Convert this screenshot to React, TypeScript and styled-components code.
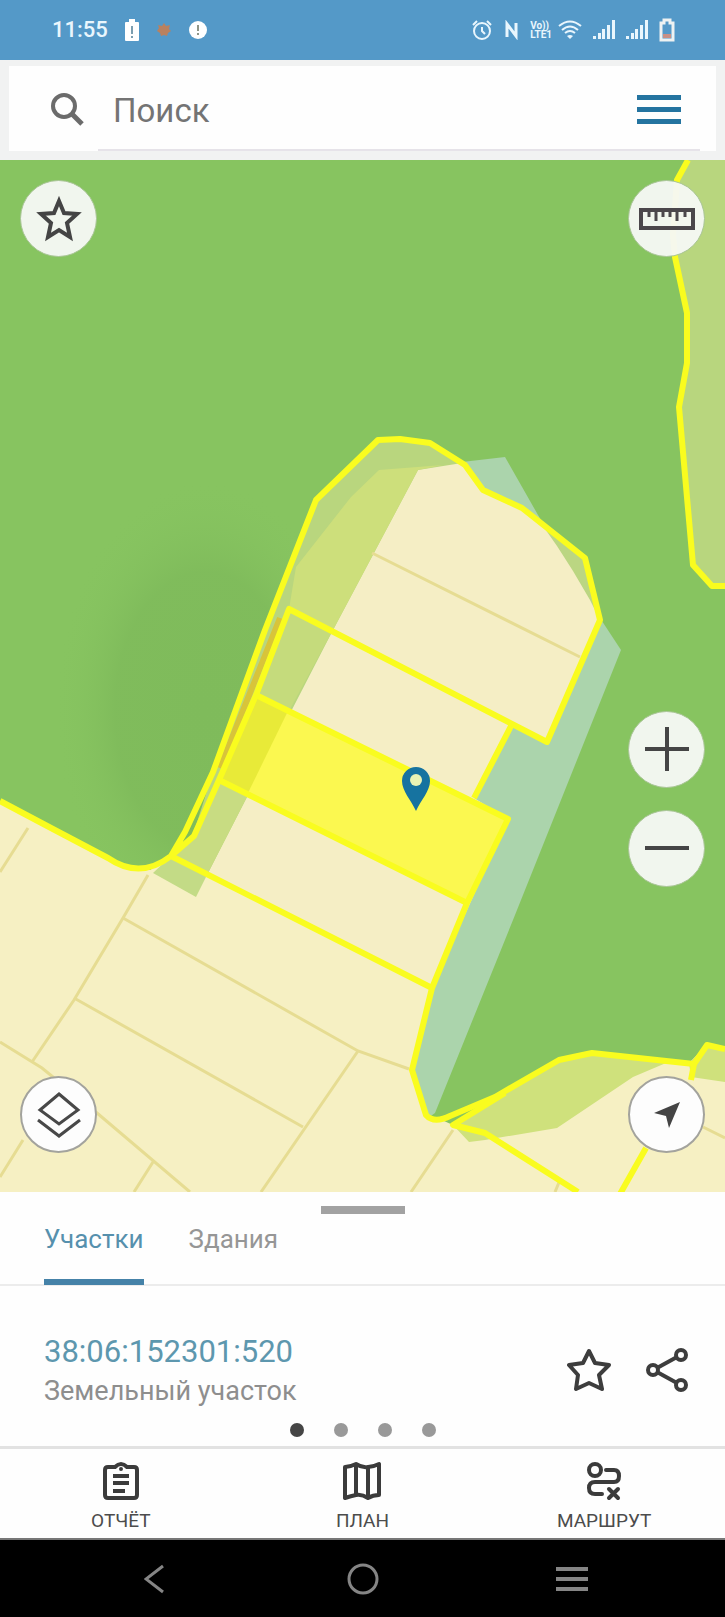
import React from "react";
import styled, { createGlobalStyle } from "styled-components";

const GlobalStyle = createGlobalStyle`
  * { box-sizing: border-box; }
  body { margin: 0; background: #fefefe; font-family: Roboto, "Liberation Sans", sans-serif; }
  button { border: 0; padding: 0; background: none; font: inherit; color: inherit; cursor: pointer; }
  svg { display: block; }
`;

const Screen = styled.div`
  display: flex;
  flex-direction: column;
  width: 100%;
`;

const StatusBar = styled.div`
  display: flex;
  align-items: center;
  justify-content: space-between;
  height: 60px;
  padding: 0 50px 0 52px;
  background: #5499c8;
  color: #e9f6fd;
`;

const StatusLeft = styled.div`
  display: flex;
  align-items: center;
  gap: 17px;
`;

const StatusRight = styled.div`
  display: flex;
  align-items: center;
  gap: 11px;
`;

const Time = styled.span`
  font-size: 22px;
  line-height: 24px;
  font-weight: 500;
`;

const Lte = styled.span`
  display: flex;
  flex-direction: column;
  font-size: 10px;
  line-height: 9px;
  font-weight: 700;
  margin-right: -5px;
`;

const SearchHeader = styled.header`
  padding: 6px 9px 9px;
  background: #f1f2f2;
`;

const SearchCard = styled.div`
  display: flex;
  align-items: center;
  gap: 26px;
  height: 85px;
  padding: 2px 34px 0 40px;
  background: linear-gradient(#e6e3e9, #e6e3e9) no-repeat 89px 100% / calc(100% - 105px) 2px #fefefe;
`;

const SearchInput = styled.input`
  flex: 1;
  min-width: 0;
  padding: 2px 0 0;
  border: 0;
  outline: 0;
  background: none;
  font: 400 33px/40px Roboto, "Liberation Sans", sans-serif;
  color: #666;
  &::placeholder { color: #747474; opacity: 1; }
`;

const MapArea = styled.main`
  position: relative;
  width: 100%;
  aspect-ratio: 725 / 1032;
  overflow: hidden;
`;

const MapDrawing = styled.svg`
  width: 100%;
  height: 100%;
`;

const MapControls = styled.div`
  position: absolute;
  inset: 0;
  display: flex;
  justify-content: space-between;
  padding: 20px 20px 39px;
`;

const ControlColumn = styled.div`
  display: flex;
  flex-direction: column;
  justify-content: space-between;
`;

const ControlStack = styled.div`
  display: flex;
  flex-direction: column;
  gap: 22px;
  margin-top: 264px;
`;

const RoundButton = styled.button<{ $outlined?: boolean }>`
  display: grid;
  place-items: center;
  width: 77px;
  height: 77px;
  border-radius: 50%;
  border: ${(p) => (p.$outlined ? "2px solid #a3a39d" : "1px solid #a9c596")};
  background: ${(p) => (p.$outlined ? "#fdfdfd" : "rgba(246, 248, 244, 0.96)")};
`;

const Sheet = styled.section`
  background: #fefefe;
`;

const HandleRow = styled.div`
  display: flex;
  justify-content: center;
  padding-top: 14px;
`;

const Handle = styled.button`
  width: 84px;
  height: 8px;
  background: #a2a2a2;
`;

const Tabs = styled.div`
  display: flex;
  gap: 45px;
  height: 72px;
  padding: 0 44px;
  border-bottom: 2px solid #ececec;
`;

const Tab = styled.button<{ $active?: boolean }>`
  display: flex;
  align-items: flex-start;
  height: 71px;
  padding-top: 9px;
  border-bottom: ${(p) => (p.$active ? "6px solid #4582a8" : "0")};
  font-size: 26px;
  line-height: 32px;
  color: ${(p) => (p.$active ? "#5690ad" : "#969696")};
`;

const Parcel = styled.article`
  display: flex;
  align-items: center;
  justify-content: space-between;
  padding: 45px 36px 14px 44px;
`;

const ParcelNumber = styled.h2`
  margin: 0;
  font-size: 31px;
  line-height: 42px;
  font-weight: 400;
  color: #5d97ae;
`;

const ParcelKind = styled.p`
  margin: 0;
  font-size: 27px;
  line-height: 36px;
  color: #8e8e8e;
`;

const ParcelActions = styled.div`
  display: flex;
  gap: 34px;
`;

const Pager = styled.div`
  display: flex;
  justify-content: center;
  gap: 30px;
  padding-bottom: 9px;
`;

const Dot = styled.button<{ $active?: boolean }>`
  width: 14px;
  height: 14px;
  border-radius: 50%;
  background: ${(p) => (p.$active ? "#454545" : "#999")};
`;

const BottomNav = styled.nav`
  display: grid;
  grid-template-columns: repeat(3, 1fr);
  height: 94px;
  border-top: 3px solid #e2e2e2;
  border-bottom: 2px solid #777;
  background: #fefefe;
`;

const NavItem = styled.a`
  display: flex;
  flex-direction: column;
  align-items: center;
  gap: 8px;
  padding-top: 12px;
  font-size: 19px;
  line-height: 24px;
  color: #4c4c4c;
  text-decoration: none;
`;

const SystemBar = styled.div`
  display: grid;
  grid-template-columns: repeat(3, 1fr);
  height: 77px;
  padding: 0 49px;
  background: #000;
`;

const SystemButton = styled.button`
  display: grid;
  place-items: center;
`;

const YELLOW = "#f9fc1f";

const Signal = () => (
  <svg width="22" height="22" viewBox="0 0 22 22" fill="currentColor" aria-hidden="true">
    <path d="M0 17h3v3H0zM5 14h3v6H5zM9 10h3v10H9zM14 6h3v14h-3zM19 1h3v19h-3z" />
  </svg>
);

function CadastralMap() {
  return (
    <MapDrawing viewBox="0 160 725 1032" preserveAspectRatio="xMidYMid slice" role="img" aria-label="Карта участков">
      <defs>
        <radialGradient id="shade">
          <stop offset="0" stopColor="#7fbb5b" />
          <stop offset="0.6" stopColor="#7fbb5b" stopOpacity="0.9" />
          <stop offset="1" stopColor="#87c460" stopOpacity="0" />
        </radialGradient>
      </defs>
      <rect y="160" width="725" height="1032" fill="#87c460" />
      <ellipse cx="205" cy="710" rx="150" ry="230" fill="url(#shade)" />

      <path d="M688 160L677 180L673 235L675 257L687 313L687 363L679 407L693 565L712 586H725V160Z" fill="#b8d67e" />

      <path d="M418 470L462 462L505 457L538 515L600 618L621 650L513 920L435 1113L428 1118L412 1070L432 988Z" fill="#abd4ac" />

      <path d="M0 801L51 828L132 870H150L171 856L432 988L412 1070L428 1118L444 1121L453 1125L559 1060L592 1053L689 1063L707 1045L725 1049V1192H0Z" fill="#f6f0c3" />
      <path d="M171 856L153 873L196 897L208 873Z" fill="#c3db86" />

      <path d="M378 440L400 439L430 443L465 465L483 490L522 508L585 558L600 620L547 742L511 726L474 798L508 819L432 988L171 856L192 838L316 500Z" fill="#f5eec5" />
      <path d="M543 526L585 558L600 620L590 600L573 571L557 546Z" fill="#bbd682" />
      <path d="M378 440L400 439L430 443L462 463L418 470L333 630L247 797L208 873L171 856L192 838L213 772L316 500Z" fill="#b9d67e" />
      <path d="M443 465L418 470L333 630L289 609L296 567L351 497L379 470Z" fill="#cddf7b" />
      <path d="M289 609L333 630L289 711L256 695Z" fill="#c5db7c" />
      <path d="M219 780L247 797L208 873L171 856L194 836Z" fill="#c8dc82" />
      <path d="M256 695L508 819L467 903L219 780Z" fill="#fbf850" />
      <path d="M256 695L288 711L247 795L219 780Z" fill="#e8ea38" />

      <path d="M453 1125L559 1060L592 1053L666 1063L633 1077L557 1128L485 1140L469 1142Z" fill="#cfe17c" />
      <path d="M689 1063L707 1045L725 1049V1082L691 1077Z" fill="#cfe17c" />

      <path
        d="M372 553L580 657M28 828L0 872M148 875L123 918L74 1000L32 1062M123 918L358 1051L409 1069M74 998L303 1127M358 1051L261 1192M0 1042L42 1068L97 1113L190 1192M153 1162L134 1192M23 1140L0 1177M453 1130L411 1192M560 1180L555 1192M703 1127L725 1138"
        fill="none"
        stroke="#e6dc92"
        strokeWidth="3"
      />

      <path d="M280 618L220 768" stroke="#d8c43a" strokeWidth="6" />
      <g fill="none" stroke={YELLOW} strokeWidth="6" strokeLinejoin="round">
        <path d="M0 801L51 828L108 858Q140 880 171 856L185 832L213 772L265 630L316 500L378 440L400 439L430 443L465 465L483 490L522 508L585 558L600 620L547 742L289 609L256 695L219 780L194 836L171 856L432 988L412 1070L426 1115Q434 1124 450 1116L495 1097L559 1060L592 1053L694 1064L707 1045L725 1049" />
        <path d="M256 695L508 819L467 903L219 780M511 726L474 798M467 903L432 988M694 1064L691 1080" />
        <path d="M505 1093L453 1125L485 1133L578 1192M646 1148L620 1194" />
        <path d="M688 160L677 180L673 235L675 257L687 313L687 363L679 407L693 565L712 586H725" />
      </g>

      <path
        d="M416 767a14 14 0 0 0-14 14c0 10 9 19 14 30c5-11 14-20 14-30a14 14 0 0 0-14-14z"
        fill="#1673a0"
      />
      <circle cx="416" cy="780" r="6" fill="#e9f3b4" />
    </MapDrawing>
  );
}

export default function App() {
  return (
    <Screen>
      <GlobalStyle />
      <StatusBar>
        <StatusLeft>
          <Time>11:55</Time>
          <svg width="14" height="22" viewBox="0 0 14 22" aria-hidden="true">
            <path d="M4 0h6v3h3q1 0 1 1v17q0 1-1 1H1q-1 0-1-1V4q0-1 1-1h3z" fill="#fff" />
            <path d="M6 7h2v8H6zM6 17h2v2H6z" fill="#7b9eb0" />
          </svg>
          <svg width="16" height="16" viewBox="0 0 16 16" aria-hidden="true">
            <path d="M8 1l2 3 4-1-1 4 2 2-3 2-1 3-3-1-3 1-1-3-3-2 2-3-1-3 4 1z" fill="#b9815f" />
          </svg>
          <svg width="18" height="18" viewBox="0 0 18 18" aria-hidden="true">
            <circle cx="9" cy="9" r="9" fill="#fff" />
            <path d="M8 4h2v6H8zM8 12h2v2H8z" fill="#8f9688" />
          </svg>
        </StatusLeft>
        <StatusRight>
          <svg width="20" height="22" viewBox="0 0 20 22" fill="none" stroke="currentColor" strokeWidth="2" aria-hidden="true">
            <circle cx="10" cy="12" r="8" />
            <path d="M10 8v4l3 3M1 6l4-4M19 6l-4-4" />
          </svg>
          <svg width="16" height="20" viewBox="0 0 16 20" fill="none" stroke="currentColor" strokeWidth="3" aria-hidden="true">
            <path d="M4 17V4l9 12V3" />
          </svg>
          <Lte>
            <span>Vo))</span>
            <span>LTE1</span>
          </Lte>
          <svg width="24" height="20" viewBox="0 0 24 20" fill="none" stroke="currentColor" strokeWidth="2" aria-hidden="true">
            <path d="M1 6q11-9 22 0M4 10q8-7 16 0M7 13q5-4 10 0" />
            <path d="M9 16q3-2 6 0l-3 3z" fill="currentColor" stroke="none" />
          </svg>
          <Signal />
          <Signal />
          <svg width="16" height="24" viewBox="0 0 16 24" fill="none" aria-hidden="true">
            <path d="M5 2h6v3h3v17H2V5h3z" stroke="#eef2f2" strokeWidth="3" />
            <path d="M4 16h8v4H4z" fill="#c78f85" />
          </svg>
        </StatusRight>
      </StatusBar>

      <SearchHeader>
        <SearchCard>
          <svg width="38" height="38" viewBox="0 0 38 38" fill="none" stroke="#6b6b6b" aria-hidden="true">
            <circle cx="15" cy="15" r="11" strokeWidth="4" />
            <path d="M22 22l11 11" strokeWidth="5" />
          </svg>
          <SearchInput type="search" placeholder="Поиск" aria-label="Поиск" />
          <button aria-label="Меню">
            <svg width="46" height="34" viewBox="0 0 46 34" fill="#2474a0">
              <path d="M1 2h44v5H1zM1 14h44v5H1zM1 26h44v5H1z" />
            </svg>
          </button>
        </SearchCard>
      </SearchHeader>

      <MapArea>
        <CadastralMap />
        <MapControls>
          <ControlColumn>
            <RoundButton aria-label="Избранное">
              <svg width="46" height="46" viewBox="0 0 46 46" fill="none" stroke="#444" strokeWidth="4">
                <path d="M23 5l5 12 13 1-10 9 3 14-11-7-11 7 3-14-10-9 13-1z" />
              </svg>
            </RoundButton>
            <RoundButton $outlined aria-label="Слои">
              <svg width="46" height="46" viewBox="0 0 46 46" fill="none" stroke="#484848" strokeWidth="3">
                <path d="M23 2l19 16-19 14L4 18z" />
                <path d="M2 28l21 16 21-16" />
              </svg>
            </RoundButton>
          </ControlColumn>
          <ControlColumn>
            <RoundButton aria-label="Линейка">
              <svg width="56" height="24" viewBox="0 0 56 24" fill="none" stroke="#4b474b">
                <path d="M2 3h52v18H2z" strokeWidth="4" />
                <path d="M10 5v5M17 5v9M24 5v5M31 5v5M38 5v9M46 5v5" strokeWidth="3" />
              </svg>
            </RoundButton>
            <ControlStack>
              <RoundButton aria-label="Приблизить">
                <svg width="46" height="46" viewBox="0 0 46 46" stroke="#454545" strokeWidth="4">
                  <path d="M23 1v44M1 23h44" />
                </svg>
              </RoundButton>
              <RoundButton aria-label="Отдалить">
                <svg width="46" height="46" viewBox="0 0 46 46" stroke="#454545" strokeWidth="4">
                  <path d="M1 23h44" />
                </svg>
              </RoundButton>
            </ControlStack>
            <RoundButton $outlined aria-label="Моё местоположение">
              <svg width="28" height="28" viewBox="0 0 28 28" fill="#444">
                <path d="M27 1L16 27l-3-12L1 12z" />
              </svg>
            </RoundButton>
          </ControlColumn>
        </MapControls>
      </MapArea>

      <Sheet>
        <HandleRow>
          <Handle aria-label="Развернуть панель" />
        </HandleRow>
        <Tabs role="tablist">
          <Tab role="tab" aria-selected="true" $active>
            Участки
          </Tab>
          <Tab role="tab" aria-selected="false">
            Здания
          </Tab>
        </Tabs>
        <Parcel>
          <div>
            <ParcelNumber>38:06:152301:520</ParcelNumber>
            <ParcelKind>Земельный участок</ParcelKind>
          </div>
          <ParcelActions>
            <button aria-label="В избранное">
              <svg width="44" height="44" viewBox="0 0 44 44" fill="none" stroke="#3d3d3d" strokeWidth="4" strokeLinejoin="round">
                <path d="M22 3l6 12 14 2-10 10 3 14-13-6-13 6 2-14L2 17l14-2z" />
              </svg>
            </button>
            <button aria-label="Поделиться">
              <svg width="44" height="44" viewBox="0 0 44 44" fill="none" stroke="#3d3d3d" strokeWidth="4">
                <circle cx="8" cy="22" r="5" />
                <circle cx="36" cy="7" r="5" />
                <circle cx="36" cy="37" r="5" />
                <path d="M12 20L32 9M12 24l20 11" />
              </svg>
            </button>
          </ParcelActions>
        </Parcel>
        <Pager>
          <Dot $active aria-label="Участок 1" />
          <Dot aria-label="Участок 2" />
          <Dot aria-label="Участок 3" />
          <Dot aria-label="Участок 4" />
        </Pager>
      </Sheet>

      <BottomNav>
        <NavItem href="#report">
          <svg width="38" height="40" viewBox="0 0 38 40" fill="none" stroke="#3b3b3b" strokeWidth="4" strokeLinejoin="round" aria-hidden="true">
            <path d="M6 6h7q6-6 12 0h7q3 0 3 3v25q0 3-3 3H6q-3 0-3-3V9q0-3 3-3z" />
            <path d="M11 15h16M11 22h16M11 30h12" />
            <circle cx="19" cy="8" r="1" strokeWidth="2" />
          </svg>
          ОТЧЁТ
        </NavItem>
        <NavItem href="#plan">
          <svg width="40" height="40" viewBox="0 0 40 40" fill="none" stroke="#3b3b3b" strokeWidth="4" strokeLinejoin="round" aria-hidden="true">
            <path d="M3 6q5 0 11-3q6 4 12 3q5 0 11-3v31q-6 0-11 3q-6-4-12-3q-5 1-11 3z" />
            <path d="M14 3v31M26 6v31" />
          </svg>
          ПЛАН
        </NavItem>
        <NavItem href="#route">
          <svg width="36" height="40" viewBox="0 0 36 40" fill="none" stroke="#3b3b3b" strokeWidth="4" strokeLinecap="round" aria-hidden="true">
            <circle cx="9" cy="9" r="6" />
            <path d="M20 9h8q5 0 5 6t-5 6H9q-6 0-6 6t6 6h7" />
            <path d="M23 28l9 9M32 28l-9 9" />
          </svg>
          МАРШРУТ
        </NavItem>
      </BottomNav>

      <SystemBar>
        <SystemButton aria-label="Назад">
          <svg width="20" height="30" viewBox="0 0 20 30" fill="none" stroke="#858585" strokeWidth="3">
            <path d="M19 2L2 15l17 13" />
          </svg>
        </SystemButton>
        <SystemButton aria-label="Домой">
          <svg width="32" height="32" viewBox="0 0 32 32" fill="none" stroke="#858585" strokeWidth="3">
            <circle cx="16" cy="16" r="14" />
          </svg>
        </SystemButton>
        <SystemButton aria-label="Недавние">
          <svg width="34" height="28" viewBox="0 0 34 28" fill="#858585">
            <path d="M1 2h32v4H1zM1 12h32v4H1zM1 22h32v4H1z" />
          </svg>
        </SystemButton>
      </SystemBar>
    </Screen>
  );
}
